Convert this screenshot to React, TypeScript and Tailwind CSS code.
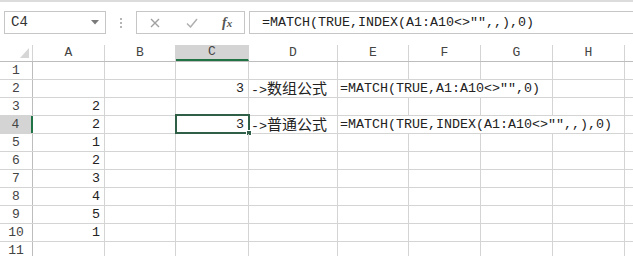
import type { ReactNode } from 'react';

const COLS = [
  { key: 'A', w: 'w-[72px]' },
  { key: 'B', w: 'w-[71px]' },
  { key: 'C', w: 'w-[73px]' },
  { key: 'D', w: 'w-[89px]' },
  { key: 'E', w: 'w-[71px]' },
  { key: 'F', w: 'w-[72px]' },
  { key: 'G', w: 'w-[72px]' },
  { key: 'H', w: 'w-[72px]' },
];

type CellText = { text: ReactNode; align?: 'left' | 'right' };

// row -> col -> content; hidden = gridlines covered by overflowing text
const DATA: Record<number, Record<string, CellText>> = {
  2: {
    C: { text: '3', align: 'right' },
    D: { text: <>-&gt;<span className="font-['Noto_Sans_CJK_SC'] text-[15px]">数组公式</span></> },
    E: { text: '=MATCH(TRUE,A1:A10<>"",0)' },
  },
  3: { A: { text: '2', align: 'right' } },
  4: {
    A: { text: '2', align: 'right' },
    C: { text: '3', align: 'right' },
    D: { text: <>-&gt;<span className="font-['Noto_Sans_CJK_SC'] text-[15px]">普通公式</span></> },
    E: { text: '=MATCH(TRUE,INDEX(A1:A10<>"",,),0)' },
  },
  5: { A: { text: '1', align: 'right' } },
  6: { A: { text: '2', align: 'right' } },
  7: { A: { text: '3', align: 'right' } },
  8: { A: { text: '4', align: 'right' } },
  9: { A: { text: '5', align: 'right' } },
  10: { A: { text: '1', align: 'right' } },
};

const HIDDEN: Record<number, string[]> = {
  2: ['E', 'F'],
  4: ['E', 'F', 'G'],
};

function FormulaBar() {
  return (
    <div className="mt-[9px] flex h-[23px] items-stretch">
      <div className="ml-[4px] flex w-[102px] items-center justify-between border border-[#c6c6c6] pl-[6px] pr-[6px]">
        <span className="text-[14px] text-[#333]">C4</span>
        <svg width="8" height="5" viewBox="0 0 8 5">
          <path d="M0 0h8L4 4.5z" fill="#7a7a7a" />
        </svg>
      </div>
      <div className="flex w-[30px] flex-col items-center justify-center gap-[2px]">
        <span className="size-[2px] bg-[#b5b5b5]" />
        <span className="size-[2px] bg-[#b5b5b5]" />
        <span className="size-[2px] bg-[#b5b5b5]" />
      </div>
      <div className="flex w-[109px] items-center border border-[#c6c6c6]">
        <svg className="ml-[13px]" width="10" height="10" viewBox="0 0 10 10">
          <path d="M1 1l8 8M9 1l-8 8" stroke="#a0a0a0" strokeWidth="1.4" />
        </svg>
        <svg className="ml-[26px]" width="12" height="10" viewBox="0 0 12 10">
          <path d="M1 5.5l3.5 3.5L11 1" stroke="#b0b0b0" strokeWidth="1.5" fill="none" />
        </svg>
        <span className="ml-[24px] font-['Liberation_Serif'] text-[14px] font-bold italic text-[#555]">
          f<span className="text-[11px]">x</span>
        </span>
      </div>
      <div className="ml-[4px] flex flex-1 items-center border border-r-0 border-[#c6c6c6] pl-[12px] text-[13.33px] text-[#222]">
        =MATCH(TRUE,INDEX(A1:A10&lt;&gt;"",,),0)
      </div>
    </div>
  );
}

function HeaderRow() {
  return (
    <div className="mt-[11px] flex h-[17px] border-b border-[#bdbdbd]">
      <div className="relative w-[33px] shrink-0 border-r border-[#d4d4d4]">
        <svg className="absolute left-[20px] top-[3px]" width="9" height="10" viewBox="0 0 9 10">
          <path d="M9 0v10H0z" fill="#d6d6d6" />
        </svg>
      </div>
      {COLS.map((c) => (
        <div
          key={c.key}
          className={`${c.w} flex shrink-0 items-center justify-center border-r border-[#d4d4d4] text-[13px] text-[#444] ${
            c.key === 'C' ? 'border-b-2 border-b-[#217346] bg-[#d4d4d4]' : ''
          }`}
        >
          {c.key}
        </div>
      ))}
      <div className="flex-1" />
    </div>
  );
}

function Row({ n }: { n: number }) {
  const cells = DATA[n] ?? {};
  const hidden = HIDDEN[n] ?? [];
  const active = n === 4;
  return (
    <div className="flex h-[18px] shrink-0 border-b border-[#d4d4d4]">
      <div
        className={`flex w-[33px] shrink-0 items-center justify-center text-[13px] text-[#444] ${
          active ? 'border-r-2 border-[#217346] bg-[#d4d4d4]' : 'border-r border-[#bdbdbd]'
        }`}
      >
        {n}
      </div>
      {COLS.map((c) => {
        const cell = cells[c.key];
        const isSel = active && c.key === 'C';
        return (
          <div
            key={c.key}
            className={`${c.w} relative flex shrink-0 items-center whitespace-nowrap border-r text-[13.33px] text-[#222] ${
              hidden.includes(c.key) ? 'border-r-transparent' : 'border-r-[#d4d4d4]'
            } ${cell?.align === 'right' ? 'justify-end pr-[4px]' : 'justify-start pl-[2px]'}`}
          >
            {cell ? <span className="relative z-10">{cell.text}</span> : null}
            {isSel ? (
              <div className="absolute -left-px -right-[2px] -top-[2px] -bottom-px border-2 border-[#2f5f47]">
                <span className="absolute -bottom-[4px] -right-[4px] size-[6px] border border-white bg-[#2f5f47]" />
              </div>
            ) : null}
          </div>
        );
      })}
      <div className="flex-1" />
    </div>
  );
}

export default function App() {
  return (
    <div className="h-[256px] w-[633px] overflow-hidden bg-white font-['Liberation_Mono','Noto_Sans_CJK_SC',monospace]">
      <div className="h-[2px] bg-[#dcdcdc]" />
      <FormulaBar />
      <HeaderRow />
      {Array.from({ length: 11 }, (_, i) => (
        <Row key={i} n={i + 1} />
      ))}
    </div>
  );
}
